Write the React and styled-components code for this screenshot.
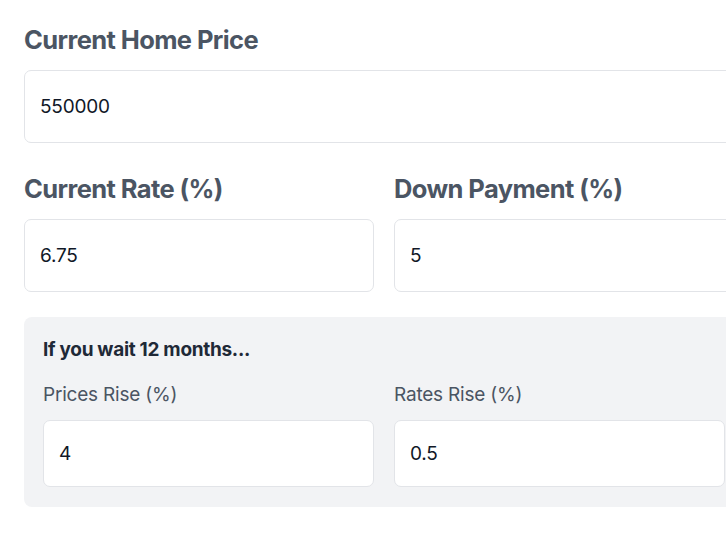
import React from 'react'
import styled, { createGlobalStyle } from 'styled-components'

const GlobalStyle = createGlobalStyle`
    body {
        margin: 0;
        background: #ffffff;
        font-family: Inter, "Noto Sans", sans-serif;
        overflow: hidden;
    }
`;

const Field = ({ label, value, small }) => (
    <FieldBox>
        <Label small={small}>{label}</Label>
        <Input small={small} defaultValue={value} />
    </FieldBox>
)

const App = () => {
  return (
    <>
      <GlobalStyle />
      <Form>
          <Field label="Current Home Price" value="550000" />
          <Row>
              <Field label="Current Rate (%)" value="6.75" />
              <Field label="Down Payment (%)" value="5" />
          </Row>
          <WaitBox>
              <WaitTitle>If you wait 12 months...</WaitTitle>
              <Row>
                  <Field small label="Prices Rise (%)" value="4" />
                  <Field small label="Rates Rise (%)" value="0.5" />
              </Row>
          </WaitBox>
      </Form>
    </>
  )
}

const Form = styled.div`
    width: 720px;
    padding: 22px 0 0 24px;
    display: flex;
    flex-direction: column;
`;

const FieldBox = styled.div`
    display: flex;
    flex-direction: column;
`;

const Label = styled.label`
    font-size: ${p => p.small ? '19px' : '25.5px'};
    font-weight: ${p => p.small ? 400 : 700};
    letter-spacing: ${p => p.small ? '-0.2px' : '-0.6px'};
    color: #4b5563;
    line-height: ${p => p.small ? '26px' : '36px'};
    margin-bottom: ${p => p.small ? '12px' : '12px'};
`;

const Input = styled.input`
    box-sizing: border-box;
    width: 100%;
    height: ${p => p.small ? '67px' : '73px'};
    padding: 0 15px;
    border: 1px solid #e2e4e8;
    border-radius: 7px;
    background: #ffffff;
    font-family: Inter, "Noto Sans", sans-serif;
    font-size: 19px;
    letter-spacing: -0.2px;
    color: #111827;
    outline: none;
    margin-bottom: ${p => p.small ? '0' : '28px'};
`;

const Row = styled.div`
    display: grid;
    grid-template-columns: 1fr 1fr;
    gap: 20px;
`;

const WaitBox = styled.div`
    box-sizing: border-box;
    width: 100%;
    margin-top: -3px;
    background: #f2f3f5;
    border-radius: 8px;
    padding: 20px 19px 20px 19px;
`;

const WaitTitle = styled.div`
    font-size: 19px;
    font-weight: 700;
    letter-spacing: -0.3px;
    color: #1f2937;
    line-height: 26px;
    margin-bottom: 19px;
`;

export default App
